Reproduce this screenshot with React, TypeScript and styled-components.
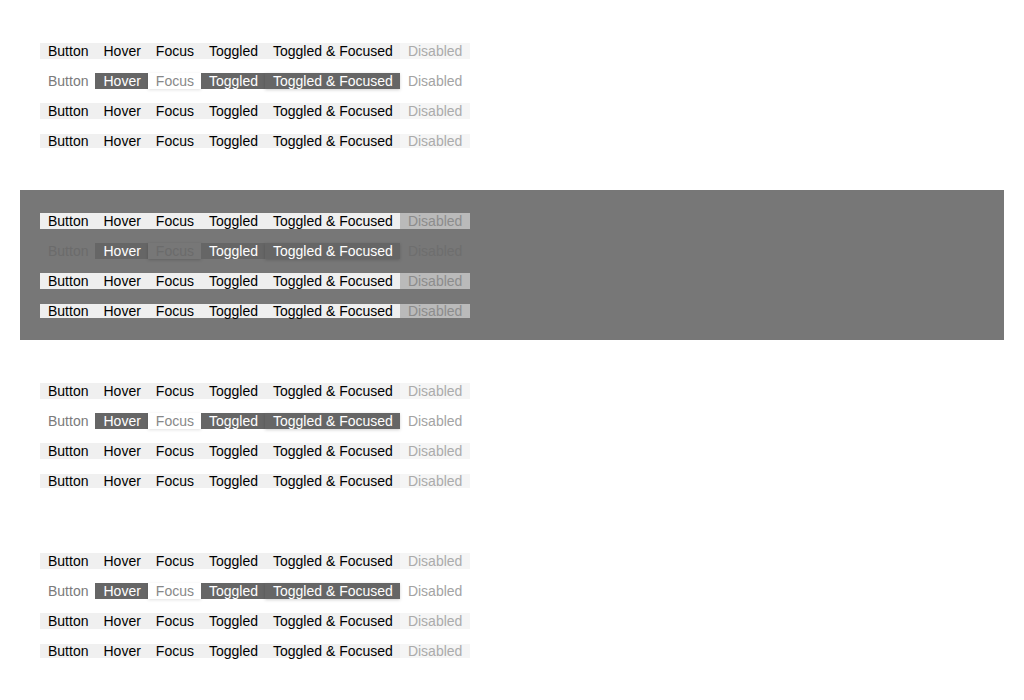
import React from "react";
import styled, { createGlobalStyle, css } from "styled-components";

const Global = createGlobalStyle`
  html, body { margin: 0; padding: 0; background: #ffffff; }
  body { font-family: "Liberation Sans", Arial, sans-serif; }
`;

type Tone = "light" | "dark";
type Kind = "solid" | "minimal" | "small";
type State = "normal" | "hover" | "focus" | "toggled" | "toggledFocus" | "disabled";

const Page = styled.div`
  display: flex;
  flex-direction: column;
  gap: 20px;
  padding: 20px;
`;

const Panel = styled.section<{ $tone: Tone }>`
  display: flex;
  flex-direction: column;
  gap: 14px;
  padding: 23px 20px 21px;
  background: ${(p) => (p.$tone === "dark" ? "#777777" : "#ffffff")};
`;

const Row = styled.div`
  display: flex;
  align-items: center;
  height: 16px;
`;

const solid = (tone: Tone, state: State) => {
  if (state === "disabled") {
    return tone === "dark"
      ? css`background: #bababa; color: #8c8c8c;`
      : css`background: #f5f5f5; color: #ababab;`;
  }
  return tone === "dark"
    ? css`background: #efefef; color: #000000;`
    : css`background: #f0f0f0; color: #000000;`;
};

const minimal = (tone: Tone, state: State) => {
  const dark = tone === "dark";
  switch (state) {
    case "hover":
    case "toggled":
      return css`background: #666666; color: #ffffff;`;
    case "toggledFocus":
      return css`
        background: #666666;
        color: #ffffff;
        box-shadow: 0 1px 3px rgba(0, 0, 0, 0.18);
      `;
    case "focus":
      return dark
        ? css`background: #777777; color: #6b6b6b; box-shadow: 0 1px 3px rgba(0, 0, 0, 0.18);`
        : css`background: #ffffff; color: #888888; box-shadow: 0 1px 3px rgba(0, 0, 0, 0.12);`;
    case "disabled":
      return dark ? css`background: transparent; color: #6e6e6e;` : css`background: transparent; color: #a3a3a3;`;
    default:
      return dark ? css`background: transparent; color: #6b6b6b;` : css`background: transparent; color: #7a7a7a;`;
  }
};

const Btn = styled.span<{ $tone: Tone; $kind: Kind; $state: State; $last?: boolean }>`
  display: inline-block;
  padding: 0 ${(p) => (p.$last ? "8px" : "7px")} 0 8px;
  font-size: 14px;
  line-height: ${(p) => (p.$kind === "small" ? "14px" : "16px")};
  height: ${(p) => (p.$kind === "small" ? "14px" : "16px")};
  white-space: nowrap;
  position: relative;
  ${(p) => (p.$kind === "minimal" ? minimal(p.$tone, p.$state) : solid(p.$tone, p.$state))}
`;

const items: { label: string; state: State }[] = [
  { label: "Button", state: "normal" },
  { label: "Hover", state: "hover" },
  { label: "Focus", state: "focus" },
  { label: "Toggled", state: "toggled" },
  { label: "Toggled & Focused", state: "toggledFocus" },
  { label: "Disabled", state: "disabled" },
];

const kinds: Kind[] = ["solid", "minimal", "solid", "small"];
const tones: Tone[] = ["light", "dark", "light", "light"];

export default function App() {
  return (
    <>
      <Global />
      <Page>
        {tones.map((tone, ti) => (
          <Panel key={ti} $tone={tone}>
            {kinds.map((kind, ki) => (
              <Row key={ki}>
                {items.map((it, i) => (
                  <Btn
                    key={it.label}
                    $tone={tone}
                    $kind={kind}
                    $state={it.state}
                    $last={i === items.length - 1}
                  >
                    {it.label}
                  </Btn>
                ))}
              </Row>
            ))}
          </Panel>
        ))}
      </Page>
    </>
  );
}
